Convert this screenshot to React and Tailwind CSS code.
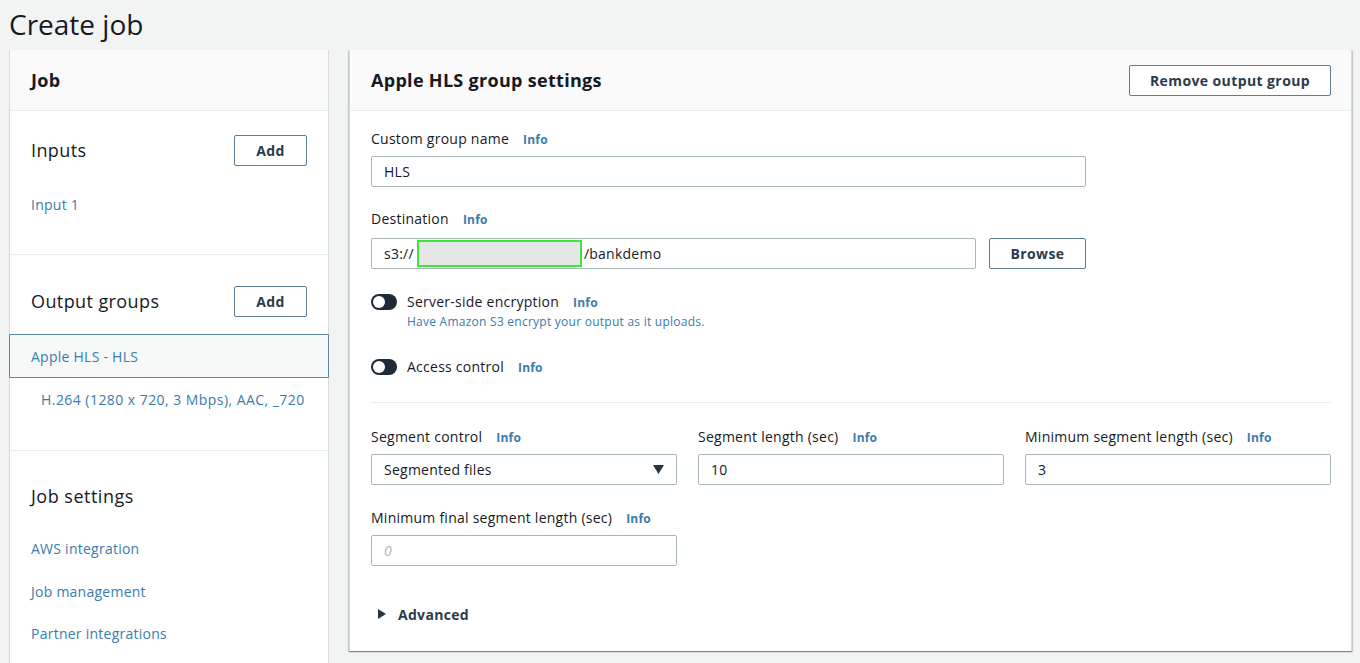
import React from "react";

const font = { fontFamily: '"Open Sans", "Noto Sans", Arial, sans-serif' };

function Info() {
  return <span className="ml-[14px] text-[12px] font-bold leading-[20px] tracking-[0.2px] text-[#3a7cab]">Info</span>;
}

function Btn({ children, className = "" }) {
  return (
    <div
      className={
        "flex h-[31px] items-center justify-center rounded-[2px] border border-[#5b7d98] bg-white text-[14px] font-bold tracking-[0.4px] text-[#2b3b4b] " +
        className
      }
    >
      {children}
    </div>
  );
}

function Label({ children, className = "" }) {
  return (
    <div className={"flex h-[20px] items-baseline text-[14px] leading-[20px] tracking-[0.25px] text-[#16191f] " + className}>
      <span>{children}</span>
      <Info />
    </div>
  );
}

function Input({ children, className = "" }) {
  return (
    <div
      className={
        "flex h-[31px] items-center rounded-[2px] border border-[#aab7b8] bg-white pl-[12px] text-[14px] tracking-[0.25px] text-[#16191f] " +
        className
      }
    >
      {children}
    </div>
  );
}

function Toggle() {
  return (
    <div className="flex h-[16px] w-[26px] shrink-0 items-center rounded-full bg-[#1d2a38] pl-[2px]">
      <div className="h-[12px] w-[12px] rounded-full bg-white" />
    </div>
  );
}

export default function App() {
  return (
    <div className="h-[663px] w-full overflow-hidden bg-[#f2f3f3]" style={font}>
      <div className="flex h-[50px] items-start pl-[9px] pt-[4px] text-[28px] leading-[40px] text-[#16191f]">
        Create job
      </div>
      <div className="flex gap-[20px] pl-[9px] pr-[8px]">
        {/* Left panel */}
        <div className="h-[620px] w-[320px] shrink-0 border-x border-[#d5dbdb] bg-white tracking-[0.25px]">
          <div className="flex h-[61px] items-center border-b border-[#eaeded] bg-[#fafafa] pl-[21px] text-[18px] font-bold tracking-[0.3px] text-[#16191f]">
            Job
          </div>
          <div className="border-b border-[#eaeded] pb-[39px] pt-[24px]">
            <div className="flex h-[31px] items-center justify-between pl-[21px] pr-[21px]">
              <span className="text-[18px] tracking-[0.4px] text-[#16191f]">Inputs</span>
              <Btn className="w-[73px]">Add</Btn>
            </div>
            <div className="mt-[29px] h-[20px] pl-[21px] text-[14px] leading-[20px] text-[#3a7cab]">Input 1</div>
          </div>
          <div className="border-b border-[#eaeded] pb-[40px] pt-[31px]">
            <div className="flex h-[31px] items-center justify-between pl-[21px] pr-[21px]">
              <span className="text-[18px] tracking-[0.4px] text-[#16191f]">Output groups</span>
              <Btn className="w-[73px]">Add</Btn>
            </div>
            <div className="-mx-px mt-[17px] flex h-[44px] items-center border border-[#5f88a8] bg-[#f7f8f8] pl-[21px] text-[14px] text-[#3a7cab]">
              Apple HLS - HLS
            </div>
            <div className="mt-[12px] h-[20px] pl-[31px] text-[14px] leading-[20px] tracking-[0.45px] text-[#3a7cab]">
              H.264 (1280 x 720, 3 Mbps), AAC, _720
            </div>
          </div>
          <div className="pl-[21px] pt-[32px]">
            <div className="h-[26px] text-[18px] leading-[26px] tracking-[0.5px] text-[#16191f]">Job settings</div>
            <div className="mt-[30px] h-[20px] text-[14px] leading-[20px] text-[#3a7cab]">AWS integration</div>
            <div className="mt-[23px] h-[20px] text-[14px] leading-[20px] text-[#3a7cab]">Job management</div>
            <div className="mt-[22px] h-[20px] text-[14px] leading-[20px] text-[#3a7cab]">Partner integrations</div>
          </div>
        </div>

        {/* Right panel */}
        <div className="h-[601px] flex-1 border-x border-[#d5dbdb] bg-white shadow-[0_1px_1px_0_rgba(0,28,36,0.3),1px_1px_1px_0_rgba(0,28,36,0.15),-1px_1px_1px_0_rgba(0,28,36,0.15)]">
          <div className="flex h-[61px] items-center justify-between border-b border-[#eaeded] bg-[#fafafa] pl-[21px] pr-[20px]">
            <span className="text-[18px] font-bold tracking-[0.3px] text-[#16191f]">Apple HLS group settings</span>
            <Btn className="w-[202px]">Remove output group</Btn>
          </div>
          <div className="pl-[21px] pr-[20px] pt-[18px]">
            <Label>Custom group name</Label>
            <Input className="mt-[7px] w-[715px]">HLS</Input>

            <Label className="mt-[22px]">Destination</Label>
            <div className="mt-[9px] flex gap-[13px]">
              <Input className="w-[605px]">
                <span>s3://</span>
                <span className="ml-[3px] h-[27px] w-[165px] border-2 border-[#3ee53a] bg-[#e6e8e8]" />
                <span className="ml-[2px]">/bankdemo</span>
              </Input>
              <Btn className="w-[97px]">Browse</Btn>
            </div>

            <div className="mt-[23px] flex items-start gap-[10px]">
              <div className="pt-[2px]">
                <Toggle />
              </div>
              <div>
                <div className="flex h-[20px] items-baseline text-[14px] leading-[20px] tracking-[0.25px] text-[#16191f]">
                  <span>Server-side encryption</span>
                  <Info />
                </div>
                <div className="h-[20px] text-[12px] leading-[20px] tracking-[0.25px] text-[#3a7cab]">
                  Have Amazon S3 encrypt your output as it uploads.
                </div>
              </div>
            </div>

            <div className="mt-[25px] flex items-center gap-[10px]">
              <Toggle />
              <div className="flex h-[20px] items-baseline text-[14px] leading-[20px] tracking-[0.25px] text-[#16191f]">
                <span>Access control</span>
                <Info />
              </div>
            </div>

            <div className="mt-[25px] border-t border-[#eaeded]" />

            <div className="mt-[24px] grid grid-cols-3 gap-x-[21px]">
              <div>
                <Label>Segment control</Label>
                <Input className="mt-[7px] justify-between pr-[12px]">
                  <span>Segmented files</span>
                  <svg width="11" height="9" viewBox="0 0 11 9">
                    <polygon points="0,0 11,0 5.5,9" fill="#2b3540" />
                  </svg>
                </Input>
              </div>
              <div>
                <Label>Segment length (sec)</Label>
                <Input className="mt-[7px]">10</Input>
              </div>
              <div>
                <Label>Minimum segment length (sec)</Label>
                <Input className="mt-[7px]">3</Input>
              </div>
            </div>

            <div className="mt-[23px] grid grid-cols-3 gap-x-[21px]">
              <div>
                <Label>Minimum final segment length (sec)</Label>
                <Input className="mt-[7px] italic text-[#aab7b8]">0</Input>
              </div>
            </div>

            <div className="mt-[38px] flex h-[20px] items-center gap-[12px] pl-[7px] text-[14px] font-bold tracking-[0.3px] text-[#2b3b4b]">
              <svg width="8" height="10" viewBox="0 0 8 10">
                <polygon points="0,0 8,5 0,10" fill="#2b3540" />
              </svg>
              Advanced
            </div>
          </div>
        </div>
      </div>
    </div>
  );
}
